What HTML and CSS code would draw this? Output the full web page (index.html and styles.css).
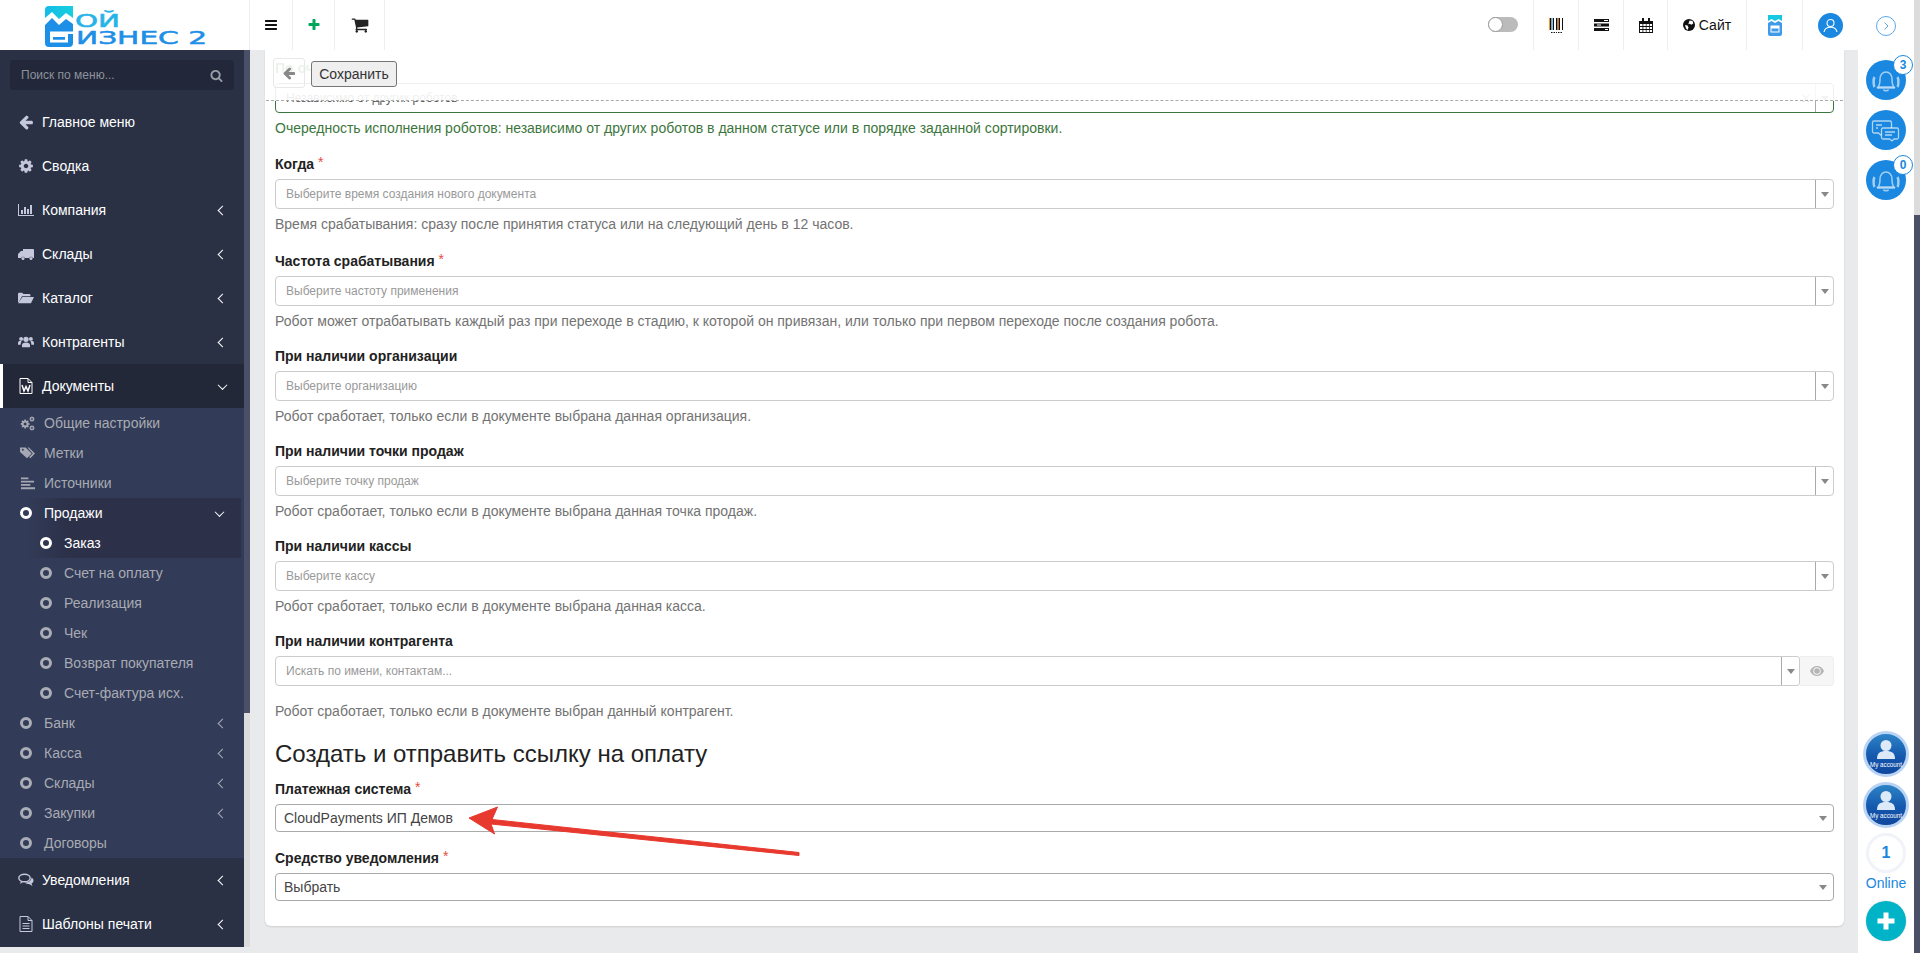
FILE: index.html
```html
<!DOCTYPE html>
<html lang="ru">
<head>
<meta charset="utf-8">
<title>Мой Бизнес 2</title>
<link rel="stylesheet" href="styles.css">
</head>
<body>
<svg class="defs" width="0" height="0" aria-hidden="true">
  <defs>
    <linearGradient id="avatarFill" x1="0" x2="0" y1="0" y2="1"><stop offset="0" stop-color="#2f86c8"/><stop offset=".55" stop-color="#1458ae"/><stop offset="1" stop-color="#0f469c"/></linearGradient>
    <symbol id="i-bars" viewBox="0 0 1792 1792"><path d="M1664 1344v128q0 26-19 45t-45 19h-1408q-26 0-45-19t-19-45v-128q0-26 19-45t45-19h1408q26 0 45 19t19 45zm0-512v128q0 26-19 45t-45 19h-1408q-26 0-45-19t-19-45v-128q0-26 19-45t45-19h1408q26 0 45 19t19 45zm0-512v128q0 26-19 45t-45 19h-1408q-26 0-45-19t-19-45v-128q0-26 19-45t45-19h1408q26 0 45 19t19 45z"/></symbol>
    <symbol id="i-plus" viewBox="0 0 1792 1792"><path d="M1600 736v192q0 40-28 68t-68 28h-416v416q0 40-28 68t-68 28h-192q-40 0-68-28t-28-68v-416h-416q-40 0-68-28t-28-68v-192q0-40 28-68t68-28h416v-416q0-40 28-68t68-28h192q40 0 68 28t28 68v416h416q40 0 68 28t28 68z"/></symbol>
    <symbol id="i-back" viewBox="0 0 1792 1792"><path d="M1664 896v128q0 53-32.5 90.5t-84.5 37.5h-704l293 294q38 36 38 90t-38 90l-75 76q-37 37-90 37-52 0-91-37l-651-652q-37-37-37-90 0-52 37-91l651-650q38-38 91-38 52 0 90 38l75 74q38 38 38 91t-38 91l-293 293h704q52 0 84.5 37.5t32.5 90.5z"/></symbol>
    <symbol id="i-cart" viewBox="0 0 1792 1792"><path d="M704 1536q0 52-38 90t-90 38-90-38-38-90 38-90 90-38 90 38 38 90zm896 0q0 52-38 90t-90 38-90-38-38-90 38-90 90-38 90 38 38 90zm128-1088v512q0 24-16.5 42.5t-40.5 21.5l-1044 122q13 60 13 70 0 16-24 64h920q26 0 45 19t19 45-19 45-45 19h-1024q-26 0-45-19t-19-45q0-11 8-31.5t16-36 21.5-40 15.5-29.5l-177-823h-204q-26 0-45-19t-19-45 19-45 45-19h256q16 0 28.5 6.5t19.5 15.5 13 24.5 8 26 5.5 29.5 4.5 26h1201q26 0 45 19t19 45z"/></symbol>
    <symbol id="i-search" viewBox="0 0 1792 1792"><path d="M1216 832q0-185-131.5-316.5t-316.5-131.5-316.5 131.5-131.5 316.5 131.5 316.5 316.5 131.5 316.5-131.5 131.5-316.5zm512 832q0 52-38 90t-90 38q-54 0-90-38l-343-342q-179 124-399 124-143 0-273.5-55.5t-225-150-150-225-55.5-273.5 55.5-273.5 150-225 225-150 273.5-55.5 273.5 55.5 225 150 150 225 55.5 273.5q0 220-124 399l343 343q37 37 37 90z"/></symbol>
    <symbol id="i-cog" viewBox="0 0 1792 1792"><path d="M1152 896q0-106-75-181t-181-75-181 75-75 181 75 181 181 75 181-75 75-181zm512-109v222q0 12-8 23t-20 13l-185 28q-19 54-39 91 35 50 107 138 10 12 10 25t-9 23q-27 37-99 108t-94 71q-12 0-26-9l-138-108q-44 23-91 38-16 136-29 186-7 28-36 28h-222q-14 0-24.5-8.5t-11.5-21.5l-28-184q-49-16-90-37l-141 107q-10 9-25 9-14 0-25-11-126-114-165-168-7-10-7-23 0-12 8-23 15-21 51-66.5t54-70.5q-27-50-41-99l-183-27q-13-2-21-12.5t-8-23.5v-222q0-12 8-23t19-13l186-28q14-46 39-92-40-57-107-138-10-12-10-24 0-10 9-23 26-36 98.5-107.5t94.5-71.5q13 0 26 10l138 107q44-23 91-38 16-136 29-186 7-28 36-28h222q14 0 24.5 8.5t11.5 21.5l28 184q49 16 90 37l142-107q9-9 24-9 13 0 25 10 129 119 165 170 7 8 7 22 0 12-8 23-15 21-51 66.5t-54 70.5q26 50 41 98l183 28q13 2 21 12.5t8 23.5z"/></symbol>
    <symbol id="i-chart" viewBox="0 0 16 16"><path d="M0 2h1v11h15v1H0z"/><path d="M3 8h2v4H3zM6 5h2v7H6zM9 7h2v5H9zM12 3h2v9h-2z"/></symbol>
    <symbol id="i-truck" viewBox="0 0 16 16"><path d="M5 3h10a1 1 0 0 1 1 1v8h-1.2a2 2 0 0 0-3.6 0H6.8a2 2 0 0 0-3.6 0H0V8l3-3h2z"/><circle cx="5" cy="12.5" r="1.5"/><circle cx="13" cy="12.5" r="1.5"/></symbol>
    <symbol id="i-folder" viewBox="0 0 18 16"><path d="M0 3.5C0 2.7.5 2 1.3 2h3.4l1.4 1.5h6.6c.7 0 1.3.6 1.3 1.3V6H4.5L1 12.5H0z"/><path d="M5 7h13l-3.4 7H0z"/></symbol>
    <symbol id="i-users" viewBox="0 0 18 16"><circle cx="9" cy="5" r="3"/><circle cx="3.5" cy="4.5" r="2.2"/><circle cx="14.5" cy="4.5" r="2.2"/><path d="M4.5 14v-2.5C4.5 9.5 6 8.5 9 8.5s4.500 1 4.500 3V14z"/><path d="M0 11V9c0-1.500 1-2 2.500-2 .6 0 1 .1 1.500.4-.6.8-1 1.800-1 3.100V11zM18 11V9c0-1.500-1-2-2.500-2-.6 0-1 .1-1.500.4.600.8 1 1.800 1 3.100V11z"/></symbol>
    <symbol id="i-word" viewBox="0 0 14 16"><path d="M1 .5h8l4 4v11H1z" fill="none" stroke="currentColor"/><path d="M9 .5v4h4" fill="none" stroke="currentColor"/><path d="M3 7l2 6 2-4.500L9 13l2-6" fill="none" stroke="currentColor" stroke-width="1.500"/></symbol>
    <symbol id="i-gears" viewBox="0 0 16 16"><use href="#i-cog" x="0" y="3" width="11" height="11"/><use href="#i-cog" x="9.500" y="0" width="6.500" height="6.500"/><use href="#i-cog" x="9.500" y="9.500" width="6.500" height="6.500"/></symbol>
    <symbol id="i-tags" viewBox="0 0 16 16"><path fill-rule="evenodd" d="M0 1.500h6l6.500 6.500L7.500 13 0 6.500zM3 3a1 1 0 1 0 0 2 1 1 0 0 0 0-2z"/><path d="M8 1.500h1.500L16 8l-5 5-1.200-1.200L13.600 8z"/></symbol>
    <symbol id="i-lines" viewBox="0 0 16 16"><path d="M1 1.500h8v2H1zM1 5h14v2H1zM1 8.500h10v2H1zM1 12h15v2H1z"/></symbol>
    <symbol id="i-comments" viewBox="0 0 16 14"><ellipse cx="6.500" cy="5" rx="5.700" ry="3.800" fill="none" stroke="currentColor" stroke-width="1.400"/><path d="M3 8l-1 3 3-2z"/><path d="M13.500 4.500c1.500 1 2 2 2 3 0 1.500-1 2.500-2 3l1 2.500-3.500-2c-2 0-3-.5-4-1.500 3.500 0 6.500-2 6.500-5z"/></symbol>
    <symbol id="i-doc" viewBox="0 0 14 16"><path d="M1 .5h8l4 4v11H1z" fill="none" stroke="currentColor"/><path d="M9 .5v4h4M3.500 7.500h7M3.500 10h7M3.500 12.500h7" fill="none" stroke="currentColor"/></symbol>
    <symbol id="i-bell" viewBox="0 0 40 40"><g fill="none" stroke="#fff" stroke-opacity=".6" stroke-width="1.500"><path d="M12 27c2-2 2-4 2-8 0-4 2.500-7 6-7s6 3 6 7c0 4 0 6 2 8z"/><path d="M11 28h18"/><path d="M17.500 29.500c.5 1.800 4.500 1.800 5 0"/><path d="M8.500 17c-1.200 2-1.200 8 0 10M31.500 17c1.200 2 1.200 8 0 10" stroke-width="2.500"/></g></symbol>
    <symbol id="i-avatar" viewBox="0 0 46 46"><circle cx="23" cy="23" r="21.500" fill="url(#avatarFill)" stroke="#b9d3f5" stroke-width="3"/><circle cx="23" cy="14.500" r="5.500" fill="#dbe9f8"/><path d="M14 28c0-6 3-8 9-8s9 2 9 8z" fill="#dbe9f8"/><text x="23" y="36" text-anchor="middle" fill="#fff" font-size="8" textLength="32" lengthAdjust="spacingAndGlyphs" font-family="Liberation Sans, sans-serif">My account</text></symbol>
  </defs>
</svg>

<div class="app">
  <div class="workspace">
    <header class="topbar">
      <div class="logo">
        <svg class="logo-svg" viewBox="0 0 249 50" width="249" height="50">
          <defs>
            <linearGradient id="logoTop" x1="0" x2="1" y1="0" y2="0"><stop offset="0" stop-color="#15bbe6"/><stop offset="1" stop-color="#16cfdf"/></linearGradient>
          </defs>
          <path d="M45 10q0-4 4-4h24v12l-7-5-7 6-7-7-7 6z" fill="url(#logoTop)"/>
          <path d="M45 25l7-7 7 7 7-6 7 5v19q0 4-4 4H49q-4 0-4-4z" fill="#1e8fe6"/>
          <path fill-rule="evenodd" d="M50 31.500h23v2.500h-5v8.500H50zM53 37v2.700h12V37z" fill="#fff"/>
          <text x="75" y="27" class="logo-word logo-word--top" textLength="45" lengthAdjust="spacingAndGlyphs">ОЙ</text>
          <text x="76" y="44" class="logo-word" textLength="131" lengthAdjust="spacingAndGlyphs">ИЗНЕС 2</text>
        </svg>
      </div>
      <div class="tb-cell tb-cell--w43"><svg class="tb-ico tb-ico--dark"><use href="#i-bars"/></svg></div>
      <div class="tb-cell tb-cell--w42"><svg class="tb-ico tb-ico--green"><use href="#i-plus"/></svg></div>
      <div class="tb-cell tb-cell--w50"><svg class="tb-ico tb-ico--cart"><use href="#i-cart"/></svg></div>
      <div class="tb-spacer"><span class="toggle"><span class="toggle-knob"></span></span></div>
      <div class="tb-cell tb-cell--w45">
        <svg width="16" height="16" viewBox="0 0 16 16"><path d="M1 1h1v12H1z" fill="#f09a28"/><path d="M2 1h1.500v12H2zM5 1h1v12H5zM8 1h1.500v12H8zM11 1h1v12h-1zM14 1h1v12h-1z" fill="#111"/><path d="M3.500 1H5v12H3.500z" fill="#7cc4e8"/><path d="M9.500 1H11v12H9.500z" fill="#c07a38"/><path d="M3 15h1.500v1H3zM5.500 15H7v1H5.500zM8 15h1v1H8zM10 15h1.500v1H10zM12.500 15H14v1h-1.500z" fill="#111"/></svg>
      </div>
      <div class="tb-cell tb-cell--w45">
        <svg width="15" height="12" viewBox="0 0 15 12"><path d="M0 0h15v3H0zM0 4.500h15v3H0zM0 9h15v3H0z" fill="#111"/><path d="M10 1h4v1h-4zM3 5.500h4v1H3zM11 10h3v1h-3z" fill="#fff"/></svg>
      </div>
      <div class="tb-cell tb-cell--w44">
        <svg width="14" height="15" viewBox="0 0 14 15"><path d="M0 3h14v12H0z" fill="#111"/><path d="M3 0h2v4H3zM9 0h2v4H9z" fill="#111"/><path d="M1 6h2.500v2H1zM4.300 6h2.500v2H4.300zM7.500 6H10v2H7.500zM10.700 6H13v2h-2.300zM1 9h2.500v2H1zM4.300 9h2.500v2H4.300zM7.500 9H10v2H7.500zM10.700 9H13v2h-2.300zM1 12h2.500v2H1zM4.300 12h2.500v2H4.300zM7.500 12H10v2H7.500zM10.700 12H13v2h-2.300z" fill="#fff"/></svg>
      </div>
      <div class="tb-cell tb-cell--w79 tb-site">
        <svg width="12" height="12" viewBox="0 0 12 12"><circle cx="6" cy="6" r="6" fill="#111"/><path d="M6.500 1.500l3 .5.800 2.500-2 1.200-1.500-1-1.500.5zM2 6l2.500.5 1 2-1 2.500L3 9.500z" fill="#fff"/></svg>
        <span>Сайт</span>
      </div>
      <div class="tb-cell tb-cell--w56">
        <svg width="14" height="21" viewBox="0 0 14 21"><path d="M0 0h14v6l-3.500-2L7 6 3.500 4 0 6z" fill="#16c8e0"/><path d="M0 8l3.500-2L7 8l3.500-2L14 8v11q0 2-2 2H2q-2 0-2-2z" fill="#3f9be8"/><path d="M2.500 10.500h9v7h-9z" fill="#fff"/><path d="M3.500 13.500h7v3h-7z" fill="#3f9be8"/></svg>
      </div>
      <div class="tb-cell tb-cell--w56">
        <span class="user-dot"><svg width="15" height="15" viewBox="0 0 15 15"><g fill="none" stroke="#fff" stroke-width="1.100"><circle cx="7.500" cy="5" r="3.500"/><path d="M1 14c.5-3 3-4.800 6.500-4.800S13.500 11 14 14"/></g></svg></span>
      </div>
    </header>

    <div class="below">
      <aside class="sidebar">
        <nav class="menu">
          <div class="search-wrap">
            <div class="search"><span>Поиск по меню...</span><svg class="search-ico"><use href="#i-search"/></svg></div>
          </div>
          <a class="nav"><svg class="nav-ico"><use href="#i-back"/></svg><span>Главное меню</span></a>
          <a class="nav"><svg class="nav-ico"><use href="#i-cog"/></svg><span>Сводка</span></a>
          <a class="nav"><svg class="nav-ico"><use href="#i-chart"/></svg><span>Компания</span><i class="chev"></i></a>
          <a class="nav"><svg class="nav-ico"><use href="#i-truck"/></svg><span>Склады</span><i class="chev"></i></a>
          <a class="nav"><svg class="nav-ico"><use href="#i-folder"/></svg><span>Каталог</span><i class="chev"></i></a>
          <a class="nav"><svg class="nav-ico"><use href="#i-users"/></svg><span>Контрагенты</span><i class="chev"></i></a>
          <a class="nav nav--active"><svg class="nav-ico nav-ico--white"><use href="#i-word"/></svg><span>Документы</span><i class="chev chev--down"></i></a>
          <div class="submenu">
            <a class="sub"><svg class="sub-ico"><use href="#i-gears"/></svg><span>Общие настройки</span></a>
            <a class="sub"><svg class="sub-ico"><use href="#i-tags"/></svg><span>Метки</span></a>
            <a class="sub"><svg class="sub-ico"><use href="#i-lines"/></svg><span>Источники</span></a>
            <div class="sale-group">
              <a class="sub sub--on"><i class="dot"></i><span>Продажи</span><i class="chev chev--down chev--sub"></i></a>
              <a class="sub sub--deep sub--on"><i class="dot"></i><span>Заказ</span></a>
            </div>
            <a class="sub sub--deep"><i class="dot"></i><span>Счет на оплату</span></a>
            <a class="sub sub--deep"><i class="dot"></i><span>Реализация</span></a>
            <a class="sub sub--deep"><i class="dot"></i><span>Чек</span></a>
            <a class="sub sub--deep"><i class="dot"></i><span>Возврат покупателя</span></a>
            <a class="sub sub--deep"><i class="dot"></i><span>Счет-фактура исх.</span></a>
            <a class="sub"><i class="dot"></i><span>Банк</span><i class="chev chev--gray"></i></a>
            <a class="sub"><i class="dot"></i><span>Касса</span><i class="chev chev--gray"></i></a>
            <a class="sub"><i class="dot"></i><span>Склады</span><i class="chev chev--gray"></i></a>
            <a class="sub"><i class="dot"></i><span>Закупки</span><i class="chev chev--gray"></i></a>
            <a class="sub"><i class="dot"></i><span>Договоры</span></a>
          </div>
          <a class="nav"><svg class="nav-ico"><use href="#i-comments"/></svg><span>Уведомления</span><i class="chev"></i></a>
          <a class="nav"><svg class="nav-ico"><use href="#i-doc"/></svg><span>Шаблоны печати</span><i class="chev"></i></a>
        </nav>
        <div class="side-scroll"><div class="side-thumb"></div></div>
      </aside>

      <main class="main">
        <div class="card">
          <div class="field field--first">
            <div class="label label--ok">По очередности</div>
            <div class="select select--ok">
              <div class="select-text select-text--value">Независимо от других роботов</div>
              <span class="clear">×</span>
              <div class="select-arrow"><i class="tri"></i></div>
            </div>
            <div class="help help--ok">Очередность исполнения роботов: независимо от других роботов в данном статусе или в порядке заданной сортировки.</div>
          </div>
          <div class="field field--second">
            <div class="label">Когда <span class="req">*</span></div>
            <div class="select"><div class="select-text">Выберите время создания нового документа</div><div class="select-arrow"><i class="tri"></i></div></div>
            <div class="help">Время срабатывания: сразу после принятия статуса или на следующий день в 12 часов.</div>
          </div>
          <div class="field">
            <div class="label">Частота срабатывания <span class="req">*</span></div>
            <div class="select"><div class="select-text">Выберите частоту применения</div><div class="select-arrow"><i class="tri"></i></div></div>
            <div class="help">Робот может отрабатывать каждый раз при переходе в стадию, к которой он привязан, или только при первом переходе после создания робота.</div>
          </div>
          <div class="field">
            <div class="label">При наличии организации</div>
            <div class="select"><div class="select-text">Выберите организацию</div><div class="select-arrow"><i class="tri"></i></div></div>
            <div class="help">Робот сработает, только если в документе выбрана данная организация.</div>
          </div>
          <div class="field">
            <div class="label">При наличии точки продаж</div>
            <div class="select"><div class="select-text">Выберите точку продаж</div><div class="select-arrow"><i class="tri"></i></div></div>
            <div class="help">Робот сработает, только если в документе выбрана данная точка продаж.</div>
          </div>
          <div class="field">
            <div class="label">При наличии кассы</div>
            <div class="select"><div class="select-text">Выберите кассу</div><div class="select-arrow"><i class="tri"></i></div></div>
            <div class="help">Робот сработает, только если в документе выбрана данная касса.</div>
          </div>
          <div class="field">
            <div class="label">При наличии контрагента</div>
            <div class="combo">
              <div class="select select--grow"><div class="select-text">Искать по имени, контактам...</div><div class="select-arrow select-arrow--narrow"><i class="tri"></i></div></div>
              <div class="addon"><svg width="14" height="10" viewBox="0 0 14 10"><path fill="#b5b5b5" fill-rule="evenodd" d="M7 0c3 0 5.500 1.800 7 5-1.500 3.200-4 5-7 5S1.500 8.200 0 5c1.500-3.200 4-5 7-5zm0 1.200a3.800 3.800 0 1 0 0 7.600 3.800 3.800 0 0 0 0-7.600z"/><circle cx="7" cy="5" r="2.800" fill="#b5b5b5"/></svg></div>
            </div>
            <div class="help help--far">Робот сработает, только если в документе выбран данный контрагент.</div>
          </div>
          <h2 class="section-title">Создать и отправить ссылку на оплату</h2>
          <div class="field field--native">
            <div class="label">Платежная система <span class="req">*</span></div>
            <div class="select select--native"><div class="select-text select-text--native">CloudPayments ИП Демов</div><div class="select-tri"><i class="tri"></i></div></div>
          </div>
          <div class="field field--last">
            <div class="label">Средство уведомления <span class="req">*</span></div>
            <div class="select select--native"><div class="select-text select-text--native">Выбрать</div><div class="select-tri"><i class="tri"></i></div></div>
          </div>
        </div>

        <div class="toolbar">
          <button class="btn-back" type="button"><svg width="14" height="14"><use href="#i-back"/></svg></button>
          <button class="btn-save" type="button">Сохранить</button>
        </div>
      </main>
    </div>
  </div>

  <aside class="rail">
    <div class="rail-top">
      <span class="collapse"><svg width="20" height="20" viewBox="0 0 20 20"><circle cx="10" cy="10" r="9.500" fill="none" stroke="#5aa7e8"/><path d="M8.500 6.500l3.500 3.500-3.500 3.500" fill="none" stroke="#5aa7e8"/></svg></span>
      <span class="bubble"><svg width="40" height="40"><use href="#i-bell"/></svg><b class="badge">3</b></span>
      <span class="bubble">
        <svg width="40" height="40" viewBox="0 0 40 40"><g fill="#1a87e0" stroke="#fff" stroke-opacity=".65" stroke-width="1.300"><path d="M8 11h16a1.500 1.500 0 0 1 1.500 1.500v9a1.500 1.500 0 0 1-1.500 1.500H17l-2.500 2-2-2H8a1.500 1.500 0 0 1-1.500-1.500v-9A1.500 1.500 0 0 1 8 11z"/><path d="M17 18h14a1.500 1.500 0 0 1 1.500 1.500v8a1.500 1.500 0 0 1-1.500 1.500h-3l-2 2-2.500-2H17a1.500 1.500 0 0 1-1.500-1.500v-8A1.500 1.500 0 0 1 17 18z"/><path d="M10 15h6M10 18h2M19 22h10M19 25h7" fill="none"/></g></svg>
      </span>
      <span class="bubble"><svg width="40" height="40"><use href="#i-bell"/></svg><b class="badge">0</b></span>
    </div>
    <div class="rail-bottom">
      <span class="avatar"><svg width="46" height="46"><use href="#i-avatar"/></svg></span>
      <span class="avatar"><svg width="46" height="46"><use href="#i-avatar"/></svg></span>
      <span class="online-count">1</span>
      <span class="online-label">Online</span>
      <span class="add"><svg width="20" height="20" viewBox="0 0 20 20"><path d="M7.500 1.500h5v6h6v5h-6v6h-5v-6h-6v-5h6z" fill="#fff"/></svg></span>
    </div>
  </aside>

  <div class="page-scroll"><div class="page-thumb"></div></div>

  <svg class="arrow" viewBox="460 800 345 60" width="345" height="60">
    <polygon points="469,818 497.500,807 492,819.500 799,852.500 799,855.500 491,824 494.600,834" fill="#e8392f" stroke="#e8392f" stroke-linejoin="round"/>
  </svg>
</div>
</body>
</html>
```

FILE: styles.css
```css
* { box-sizing: border-box; }
html, body { margin: 0; padding: 0; height: 100%; overflow: hidden; }
body { font-family: "Liberation Sans", Arial, sans-serif; font-size: 14px; color: #333; background: #e9eaec; }
.defs { position: absolute; }
a { color: inherit; text-decoration: none; }

.app { position: relative; display: flex; height: 953px; }
.workspace { flex: 1; min-width: 0; display: flex; flex-direction: column; }

/* top bar */
.topbar { height: 50px; flex: none; display: flex; background: #fff; }
.logo { width: 249px; flex: none; }
.logo-svg { display: block; }
.logo-word { font-family: "DejaVu Sans", sans-serif; font-size: 18px; fill: #1e8fe6; stroke: #1e8fe6; stroke-width: .5px; }
.logo-word--top { fill: #25b3e8; stroke: #25b3e8; font-size: 17px; }
.tb-cell { flex: none; display: flex; align-items: center; justify-content: center; border-left: 1px solid #eee; }
.tb-cell--w43 { width: 43px; }
.tb-cell--w42 { width: 42px; }
.tb-cell--w50 { width: 50px; }
.tb-cell--w45 { width: 45px; }
.tb-cell--w44 { width: 44px; }
.tb-cell--w79 { width: 79px; }
.tb-cell--w56 { width: 56px; }
.tb-spacer { flex: 1; display: flex; align-items: center; justify-content: flex-end; padding-right: 15px; border-left: 1px solid #eee; padding-bottom: 1px; }
.tb-ico { width: 14px; height: 14px; }
.tb-ico--dark { fill: #111; }
.tb-ico--green { fill: #00a65a; }
.tb-ico--cart { fill: #222; width: 18px; height: 18px; }
.toggle { width: 30px; height: 15px; border-radius: 8px; background: #bbb; display: block; position: relative; }
.toggle-knob { position: absolute; left: 0; top: 0; width: 15px; height: 15px; border-radius: 50%; background: #fff; border: 1px solid #999; }
.tb-site { gap: 4px; color: #111; font-size: 14px; }
.user-dot { width: 25px; height: 25px; border-radius: 50%; background: #1a87e0; display: flex; align-items: center; justify-content: center; }

.below { flex: 1; min-height: 0; display: flex; }

/* sidebar */
.sidebar { width: 250px; flex: none; display: flex; height: 897px; }
.menu { width: 244px; flex: none; background: #2a3145; color: #fff; }
.side-scroll { width: 6px; background: #dcdcdc; }
.side-thumb { height: 663px; background: #4a5068; }
.search-wrap { padding: 10px 10px 10px; height: 50px; }
.search { height: 30px; background: #22283a; border-radius: 3px; display: flex; align-items: center; justify-content: space-between; padding: 0 11px; color: #8d919c; font-size: 12px; }
.search-ico { width: 13px; height: 13px; fill: #9a9da6; }
.nav { height: 44px; display: flex; align-items: center; padding: 0 18px 0 18px; font-size: 14px; }
.nav > span { margin-left: 8px; }
.nav-ico { width: 16px; height: 16px; fill: #c5c8dc; color: #c5c8dc; flex: none; }
.nav-ico--white { fill: #fff; color: #fff; }
.nav--active { background: #222838; border-left: 3px solid #fff; padding-left: 15px; }
.chev { margin-left: auto; width: 7px; height: 7px; border-left: 1.5px solid #fff; border-bottom: 1.5px solid #fff; transform: rotate(45deg); flex: none; }
.chev--down { transform: rotate(-45deg) translate(1px, -1px); }
.chev--gray { border-color: #a8abb5; border-width: 1px; }
.submenu { background: #323b57; color: #a8abb3; }
.sub { height: 30px; display: flex; align-items: center; padding: 0 18px 0 20px; }
.sub > span { margin-left: 11px; }
.sub-ico { width: 15px; height: 15px; fill: #a5a8b2; flex: none; margin-right: -2px; }
.sub--deep { padding-left: 40px; }
.sub--on { color: #fff; }
.dot { width: 12px; height: 12px; border: 3px solid #aaadb5; border-radius: 50%; flex: none; margin-right: 1px; }
.sub--on .dot { border-color: #fff; }
.sale-group { background: linear-gradient(90deg, transparent 28px, #2c3048 70px, #2c3048 241px, transparent 241px); }
.sale-group .chev { margin-right: 3px; }

/* main */
.main { flex: 1; min-width: 0; position: relative; overflow: hidden; }
.card { margin: 0 14px 0 15px; padding: 8px 10px 25px; background: #fff; border-radius: 0 0 6px 6px; box-shadow: 0 1px 2px rgba(0, 0, 0, .12); }
.field { margin-bottom: 15px; }
.field--first { margin-bottom: 16px; }
.field--second { margin-bottom: 17px; }
.field--native { margin-bottom: 16px; }
.field--last { margin-bottom: 0; }
.label { font-weight: 700; font-size: 14px; line-height: 20px; height: 20px; margin-bottom: 5px; color: #222; }
.label--ok { color: #3c763d; }
.req { color: #e74c3c; font-weight: 400; line-height: 0; vertical-align: 2px; }
.select { height: 30px; display: flex; align-items: center; background: #fff; border: 1px solid #ccc; border-radius: 4px; }
.select--ok { border-color: #3c763d; }
.select--grow { flex: 1; min-width: 0; }
.select-text { flex: 1; min-width: 0; padding-left: 10px; font-size: 12px; color: #999; }
.select-text--value { color: #555; }
.select-arrow { width: 18px; height: 100%; flex: none; display: flex; align-items: center; justify-content: center; border-left: 1px solid #aaa; }
.select-arrow--narrow { width: 18px; }
.clear { color: #999; font-size: 14px; font-weight: 700; margin-right: 5px; }
.tri { display: block; width: 0; height: 0; border-left: 4px solid transparent; border-right: 4px solid transparent; border-top: 5px solid #888; }
.help { margin-top: 5px; line-height: 20px; height: 20px; color: #737373; }
.help--ok { color: #3c763d; }
.help--far { margin-top: 15px; }
.combo { display: flex; }
.combo .select { border-radius: 4px 3px 3px 4px; }
.addon { width: 34px; flex: none; display: flex; align-items: center; justify-content: center; background: #f6f6f6; border: 1px solid #eee; border-left: 0; border-radius: 0 4px 4px 0; }
.section-title { margin: 20px 0 12px; font-size: 24px; line-height: 26px; font-weight: 400; color: #222; }
.select--native { height: 28px; border-color: #aaa; }
.select-text--native { padding-left: 8px; font-size: 14px; color: #444; }
.select-tri { width: 21px; flex: none; display: flex; justify-content: center; }

/* sticky toolbar */
.toolbar { position: absolute; left: 16px; top: 0; width: 1577px; height: 51px; display: flex; align-items: flex-start; padding: 8px 0 0 7px; background: rgba(255, 255, 255, .9); border-bottom: 1px dashed #aaa; }
.btn-back { width: 32px; height: 30px; padding: 0; display: flex; align-items: center; justify-content: center; background: transparent; border: 1px solid #e8e8e8; border-radius: 3px; fill: #888; }
.btn-save { margin: 3px 0 0 6px; width: 86px; height: 26px; padding: 0; background: #efefef; border: 1px solid #767676; border-radius: 3px; font: 14px "Liberation Sans", Arial, sans-serif; color: #333; }

/* right rail */
.rail { width: 56px; flex: none; background: #fff; display: flex; flex-direction: column; justify-content: space-between; align-items: center; padding: 16px 0 12px; }
.rail-top, .rail-bottom { display: flex; flex-direction: column; align-items: center; }
.collapse { height: 20px; margin-bottom: 24px; display: block; }
.collapse svg { display: block; }
.bubble { position: relative; width: 40px; height: 40px; border-radius: 50%; background: #1a87e0; margin-bottom: 10px; display: block; }
.bubble:last-child { margin-bottom: 0; }
.bubble svg { display: block; }
.badge { position: absolute; left: 27px; top: -5px; width: 20px; height: 20px; border-radius: 50%; background: #fff; border: 1px solid #1a87e0; color: #1a87e0; font-size: 12px; line-height: 18px; text-align: center; }
.avatar { width: 46px; height: 46px; margin-bottom: 5px; display: block; }
.avatar svg { display: block; }
.online-count { width: 40px; height: 40px; border-radius: 50%; border: 3px solid #f1f3f8; color: #1a87e0; font-size: 16px; font-weight: 700; display: flex; align-items: center; justify-content: center; }
.online-label { height: 20px; line-height: 20px; color: #1a87e0; font-size: 14px; }
.add { width: 40px; height: 40px; margin-top: 8px; border-radius: 50%; background: #00b3c7; display: flex; align-items: center; justify-content: center; box-shadow: 0 0 2px rgba(0, 0, 0, .2); }

.page-scroll { width: 6px; flex: none; background: #dcdcdc; padding-top: 215px; }
.page-thumb { height: 100%; background: #4a5068; }

/* annotation drawn over the form */
.arrow { position: absolute; left: 460px; top: 800px; pointer-events: none; }
```
